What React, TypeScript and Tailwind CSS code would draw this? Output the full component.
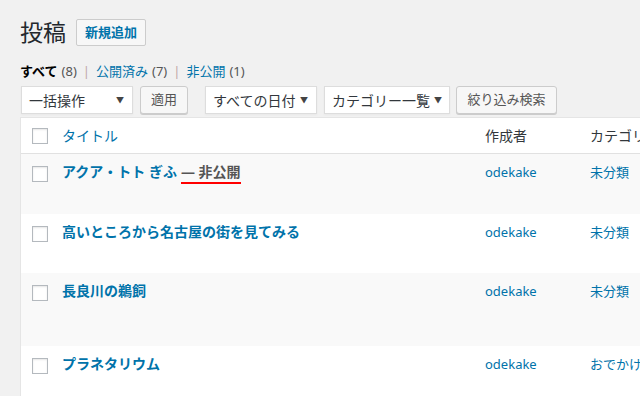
import React from 'react'

const font = { fontFamily: '"Noto Sans", "Noto Sans CJK JP", sans-serif' }

interface Post {
  title: string
  draft?: boolean
  author: string
  category: string
  height: string
  bg: string
}

const posts: Post[] = [
  { title: 'アクア・トト ぎふ', draft: true, author: 'odekake', category: '未分類', height: 'h-[60px]', bg: 'bg-[#f9f9f9]' },
  { title: '高いところから名古屋の街を見てみる', author: 'odekake', category: '未分類', height: 'h-[59px]', bg: 'bg-white' },
  { title: '長良川の鵜飼', author: 'odekake', category: '未分類', height: 'h-[73px]', bg: 'bg-[#f9f9f9]' },
  { title: 'プラネタリウム', author: 'odekake', category: 'おでかけ', height: 'h-[60px]', bg: 'bg-white' }
]

const Checkbox = () => (
  <span className="block w-4 h-4 border border-[#b4b9be] bg-white shadow-[inset_0_1px_2px_rgba(0,0,0,0.1)]" />
)

const Select = ({ label, width }: { label: string; width: string }) => (
  <div className={`${width} h-[28px] flex items-center justify-between bg-white border border-[#ddd] pl-[7px] pr-[8px] text-[14px] text-[#32373c] shadow-[0_1px_2px_rgba(0,0,0,0.04)]`}>
    <span className="whitespace-nowrap">{label}</span>
    <span className="ml-[4px] text-[8px] text-[#444]">▼</span>
  </div>
)

const Button = ({ label, width }: { label: string; width: string }) => (
  <div className={`${width} h-[28px] flex items-center justify-center bg-[#f7f7f7] border border-[#ccc] rounded-[3px] shadow-[0_1px_0_#ccc] text-[13px] text-[#555]`}>
    {label}
  </div>
)

export default function App() {
  return (
    <div className="w-[640px] h-[396px] overflow-hidden bg-[#f1f1f1] text-[#23282d]" style={font}>
      <div className="pl-[20px] pt-[19px]">
        <div className="flex items-center gap-[10px] h-[27px]">
          <h1 className="text-[23px] font-normal leading-none text-[#23282d]">投稿</h1>
          <div className="h-[27px] px-[8px] flex items-center bg-[#f7f7f7] border border-[#ccc] rounded-[2px] text-[13px] font-bold text-[#0073aa]">
            新規追加
          </div>
        </div>

        <div className="mt-[16px] flex items-center text-[13px] h-[20px]">
          <span className="font-bold text-black">すべて</span>
          <span className="ml-[4px] text-[#555]">(8)</span>
          <span className="mx-[6px] text-[#c0a8a8]">|</span>
          <span className="text-[#0073aa]">公開済み</span>
          <span className="ml-[4px] text-[#555]">(7)</span>
          <span className="mx-[6px] text-[#c0a8a8]">|</span>
          <span className="text-[#0073aa]">非公開</span>
          <span className="ml-[4px] text-[#555]">(1)</span>
        </div>

        <div className="mt-[4px] flex items-center">
          <div className="ml-[1px]"><Select label="一括操作" width="w-[112px]" /></div>
          <div className="ml-[7px]"><Button label="適用" width="w-[48px]" /></div>
          <div className="ml-[17px]"><Select label="すべての日付" width="w-[112px]" /></div>
          <div className="ml-[7px]"><Select label="カテゴリー一覧" width="w-[126px]" /></div>
          <div className="ml-[6px]"><Button label="絞り込み検索" width="w-[101px]" /></div>
        </div>

        <div className="mt-[3px] w-[700px] bg-white border border-[#e5e5e5]">
          <div className="flex items-center h-[36px] border-b border-[#e1e1e1]">
            <div className="w-[41px] pl-[11px]"><Checkbox /></div>
            <div className="w-[423px] text-[14px] text-[#0073aa]">タイトル</div>
            <div className="w-[105px] text-[14px] text-[#32373c]">作成者</div>
            <div className="text-[14px] text-[#32373c] whitespace-nowrap">カテゴリー</div>
          </div>
          {posts.map((p) => (
            <div key={p.title} className={`flex items-start ${p.height} ${p.bg}`}>
              <div className="w-[41px] pl-[11px] pt-[12px]"><Checkbox /></div>
              <div className="w-[423px] pt-[8px] text-[14px] font-bold leading-[20px] text-[#0073aa] whitespace-nowrap">
                {p.title}
                {p.draft && (
                  <span className="ml-[4px] inline-block text-[#555] border-b-2 border-[#ff0000] pb-[1px] leading-[19px]">
                    — 非公開
                  </span>
                )}
              </div>
              <div className="w-[105px] pt-[8px] text-[13px] leading-[20px] text-[#0073aa]">{p.author}</div>
              <div className="pt-[8px] text-[13px] leading-[20px] text-[#0073aa] whitespace-nowrap">{p.category}</div>
            </div>
          ))}
        </div>
      </div>
    </div>
  )
}
